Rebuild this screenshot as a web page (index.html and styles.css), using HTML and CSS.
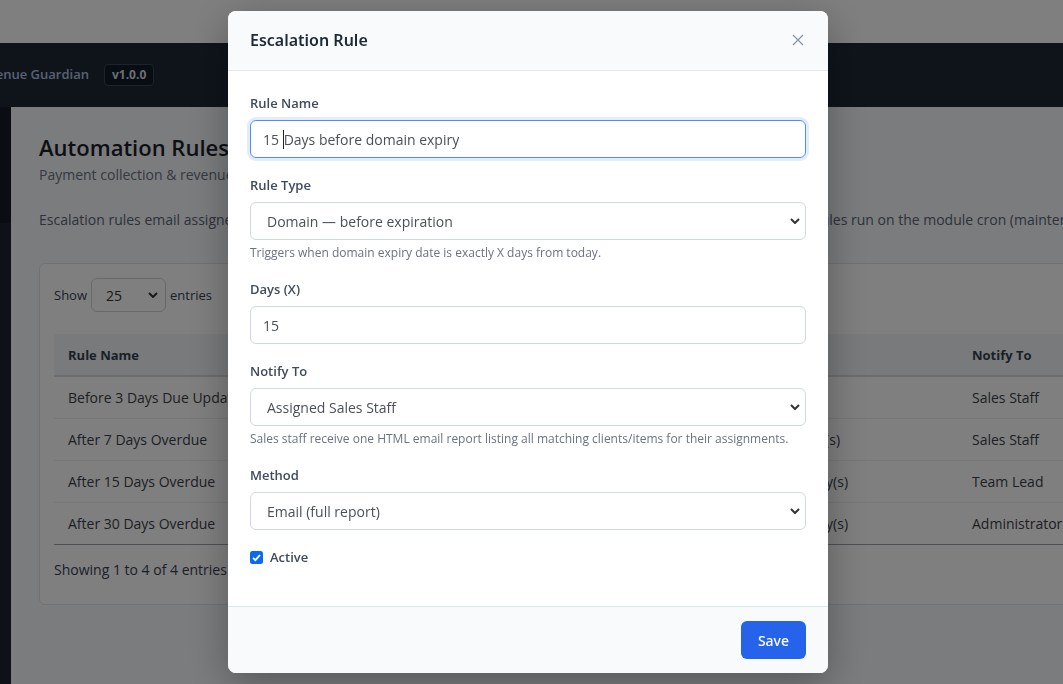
FILE: index.html
```html
<!DOCTYPE html>
<html lang="en">
<head>
<meta charset="utf-8">
<title>Automation Rules</title>
<link rel="stylesheet" href="styles.css">
</head>
<body>
<div class="page">
  <div class="topbar"></div>
  <header class="appbar">
    <span class="brand">Revenue Guardian</span>
    <span class="badge">v1.0.0</span>
  </header>
  <div class="layout">
    <aside class="sidebar"><div class="sidebar-top"></div></aside>
    <main class="main">
      <h1 class="page-title">Automation Rules</h1>
      <p class="subtitle">Payment collection &amp; revenue protection automation</p>
      <p class="desc">Escalation rules email assigned sales staff, team leads or administrators one HTML report listing all items for each run. Rules run on the module cron (maintenance) once per day.</p>
      <section class="card">
        <div class="length">
          <span>Show</span>
          <div class="length-select"><span>25</span>
            <svg class="chev" width="10" height="6" viewBox="0 0 10 6"><path d="M1 1l4 4 4-4" fill="none" stroke="#333" stroke-width="2"/></svg>
          </div>
          <span>entries</span>
        </div>
        <table class="rules">
          <colgroup>
            <col class="c-name"><col class="c-type"><col class="c-trig"><col class="c-notify"><col class="c-status"><col class="c-act">
          </colgroup>
          <thead>
            <tr><th>Rule Name</th><th>Type</th><th>Trigger</th><th>Notify To</th><th>Status</th><th>Actions</th></tr>
          </thead>
          <tbody>
            <tr><td>Before 3 Days Due Update</td><td>Invoice — before due</td><td>Due in 3 day(s)</td><td>Sales Staff</td><td>Active</td><td>Edit</td></tr>
            <tr><td>After 7 Days Overdue</td><td>Invoice — overdue</td><td>Overdue 7 day(s)</td><td>Sales Staff</td><td>Active</td><td>Edit</td></tr>
            <tr><td>After 15 Days Overdue</td><td>Invoice — overdue</td><td>Overdue 15 day(s)</td><td>Team Lead</td><td>Active</td><td>Edit</td></tr>
            <tr><td>After 30 Days Overdue</td><td>Invoice — overdue</td><td>Overdue 30 day(s)</td><td>Administrator</td><td>Active</td><td>Edit</td></tr>
          </tbody>
        </table>
        <div class="info">Showing 1 to 4 of 4 entries</div>
      </section>
    </main>
  </div>
</div>

<div class="backdrop"></div>

<div class="modal">
  <div class="modal-header">
    <h2 class="modal-title">Escalation Rule</h2>
    <svg class="close" width="12" height="12" viewBox="0 0 12 12"><path d="M1 1l10 10M11 1L1 11" stroke="#8b95a3" stroke-width="1.3" fill="none"/></svg>
  </div>
  <div class="modal-body">
    <div class="field">
      <label class="label">Rule Name</label>
      <div class="control focus">15&nbsp;<span class="caret"></span>Days before domain expiry</div>
    </div>
    <div class="field">
      <label class="label">Rule Type</label>
      <div class="control select"><span>Domain — before expiration</span>
        <svg class="chev" width="10" height="6" viewBox="0 0 10 6"><path d="M1 1l4 4 4-4" fill="none" stroke="#333" stroke-width="2"/></svg>
      </div>
      <div class="help">Triggers when domain expiry date is exactly X days from today.</div>
    </div>
    <div class="field">
      <label class="label">Days (X)</label>
      <div class="control">15</div>
    </div>
    <div class="field">
      <label class="label">Notify To</label>
      <div class="control select"><span>Assigned Sales Staff</span>
        <svg class="chev" width="10" height="6" viewBox="0 0 10 6"><path d="M1 1l4 4 4-4" fill="none" stroke="#333" stroke-width="2"/></svg>
      </div>
      <div class="help">Sales staff receive one HTML email report listing all matching clients/items for their assignments.</div>
    </div>
    <div class="field">
      <label class="label">Method</label>
      <div class="control select"><span>Email (full report)</span>
        <svg class="chev" width="10" height="6" viewBox="0 0 10 6"><path d="M1 1l4 4 4-4" fill="none" stroke="#333" stroke-width="2"/></svg>
      </div>
    </div>
    <div class="field check">
      <svg class="checkbox" width="13" height="13" viewBox="0 0 13 13"><rect x="0" y="0" width="13" height="13" rx="2.5" fill="#0b6bf0"/><path d="M3 6.8l2.4 2.4L10 4" fill="none" stroke="#fff" stroke-width="1.8"/></svg>
      <span class="check-label">Active</span>
    </div>
  </div>
  <div class="modal-footer">
    <button class="btn">Save</button>
  </div>
</div>
</body>
</html>
```

FILE: styles.css
```css
* { box-sizing: border-box; }
html, body { margin: 0; height: 100%; }
body {
  font-family: "Open Sans", "Noto Sans", sans-serif;
  background: #f6f8fa;
  overflow: hidden;
  width: 1063px;
  height: 684px;
}

.topbar { height: 43px; background: #ffffff; }

.appbar {
  height: 64px;
  background: #1f2937;
  display: flex;
  align-items: center;
  gap: 15px;
}
.brand {
  margin-left: -27px;
  margin-top: -2px;
  font-size: 13px;
  font-weight: 600;
  color: #b0c4e4;
}
.badge {
  font-size: 12px;
  font-weight: 700;
  color: #d4dce8;
  background: #111827;
  border: 1px solid #3b4658;
  border-radius: 4px;
  padding: 2px 7px;
  line-height: 16px;
}

.layout { display: flex; height: 577px; }
.sidebar { width: 11px; flex: none; background: #1c2333; }
.sidebar-top { height: 116px; background: #151b29; }

.main { flex: 1; min-width: 0; padding: 25px 0 0 28px; }
.page-title {
  margin: 0;
  font-size: 22px;
  font-weight: 600;
  line-height: 30px;
  color: #1a1f2b;
}
.subtitle { margin: 3px 0 0; font-size: 14px; line-height: 20px; color: #6b7280; }
.desc { margin: 25px 0 0; font-size: 14px; line-height: 20px; color: #5b6678; white-space: nowrap; }

.card {
  margin-top: 33px;
  width: 1300px;
  background: #ffffff;
  border: 1px solid #dfe3e8;
  border-radius: 6px;
  padding: 14px 14px 24px;
}
.length { display: flex; align-items: center; gap: 4px; font-size: 13px; color: #374151; }
.length-select {
  width: 75px;
  height: 34px;
  border: 1px solid #ced4da;
  border-radius: 6px;
  display: flex;
  align-items: center;
  justify-content: space-between;
  padding: 0 7px 0 14px;
  font-size: 14px;
  color: #333;
}

.rules {
  margin-top: 22px;
  border-collapse: collapse;
  table-layout: fixed;
  width: 1250px;
}
.c-name { width: 300px; }
.c-type { width: 362px; }
.c-trig { width: 242px; }
.c-notify { width: 160px; }
.c-status { width: 100px; }
.c-act { width: 86px; }
.rules th {
  height: 42px;
  background: #f1f4f7;
  text-align: left;
  padding: 0 14px;
  font-size: 13px;
  font-weight: 700;
  color: #374151;
  border-bottom: 2px solid #d5d9df;
}
.rules td {
  height: 42px;
  padding: 0 14px;
  border-bottom: 1px solid #eceff3;
  font-size: 14px;
  color: #3a3f47;
  white-space: nowrap;
  overflow: hidden;
}
.rules tbody tr:last-child td { border-bottom: 1px solid #9aa1ab; }
.info { margin-top: 15px; font-size: 14px; line-height: 20px; color: #374151; }

.backdrop { position: fixed; inset: 0; background: rgba(0, 0, 0, 0.5); }

.modal {
  position: fixed;
  top: 11px;
  left: 228px;
  width: 600px;
  background: #ffffff;
  border-radius: 8px;
  overflow: hidden;
  box-shadow: 0 10px 40px rgba(0, 0, 0, 0.3);
}
.modal-header {
  height: 60px;
  background: #f8fafc;
  border-bottom: 1px solid #e2e8f0;
  display: flex;
  align-items: center;
  justify-content: space-between;
  padding: 0 24px 2px 22px;
}
.modal-title {
  margin: 0;
  font-family: "Noto Sans", "Open Sans", sans-serif;
  font-size: 16px;
  font-weight: 600;
  color: #1e293b;
}
.modal-body { padding: 22px 22px 22px; }
.field { margin-bottom: 17px; }
.label {
  display: block;
  font-size: 13px;
  font-weight: 600;
  line-height: 20px;
  color: #3f4a5c;
  margin-bottom: 7px;
}
.control {
  height: 38px;
  border: 1px solid #cfd8e3;
  border-radius: 6px;
  display: flex;
  align-items: center;
  padding: 0 12px;
  font-size: 14px;
  color: #4b5058;
  white-space: pre;
}
.control.focus {
  border-color: #4f8ff7;
  box-shadow: 0 0 0 3px rgba(59, 130, 246, 0.15);
}
.caret { width: 1px; height: 19px; background: #222; }
.control.select { padding: 0 5px 0 16px; justify-content: space-between; }
.help { margin-top: 4px; font-size: 12px; line-height: 18px; color: #6b7280; }
.check { display: flex; align-items: center; gap: 7px; height: 20px; }
.check-label { font-size: 13px; font-weight: 600; color: #3f4a5c; }

.modal-footer {
  background: #f8fafc;
  border-top: 1px solid #e2e8f0;
  padding: 14px 22px;
  display: flex;
  justify-content: flex-end;
}
.btn {
  height: 38px;
  padding: 0 17px;
  background: #2563eb;
  color: #ffffff;
  border: none;
  border-radius: 6px;
  font-family: "Noto Sans", "Open Sans", sans-serif;
  font-size: 14px;
  font-weight: 500;
}
```
